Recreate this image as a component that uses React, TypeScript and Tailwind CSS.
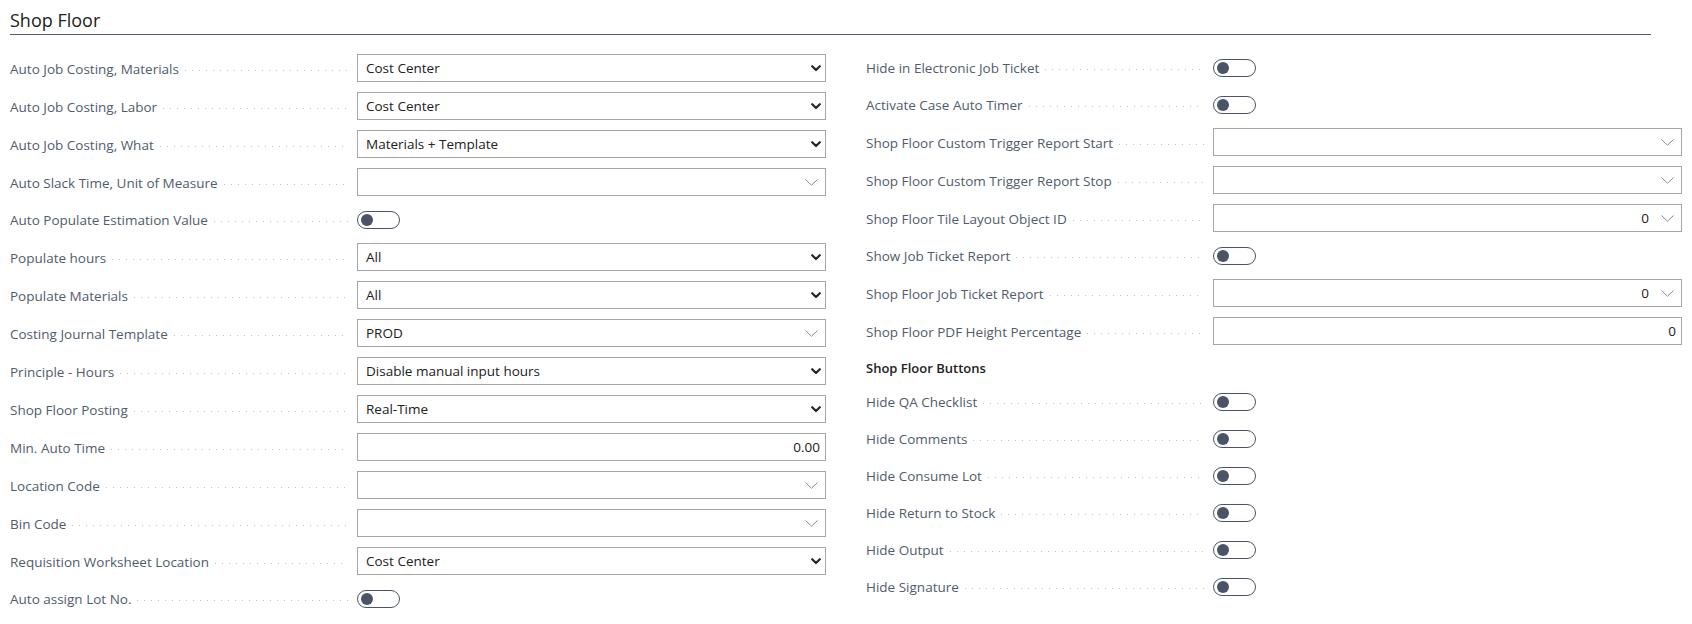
type Kind = 'option' | 'lookup' | 'number' | 'toggle';

type Field = {
  label: string;
  kind: Kind;
  value?: string;
  alignRight?: boolean;
};

const leftFields: Field[] = [
  { label: 'Auto Job Costing, Materials', kind: 'option', value: 'Cost Center' },
  { label: 'Auto Job Costing, Labor', kind: 'option', value: 'Cost Center' },
  { label: 'Auto Job Costing, What', kind: 'option', value: 'Materials + Template' },
  { label: 'Auto Slack Time, Unit of Measure', kind: 'lookup', value: '' },
  { label: 'Auto Populate Estimation Value', kind: 'toggle' },
  { label: 'Populate hours', kind: 'option', value: 'All' },
  { label: 'Populate Materials', kind: 'option', value: 'All' },
  { label: 'Costing Journal Template', kind: 'lookup', value: 'PROD' },
  { label: 'Principle - Hours', kind: 'option', value: 'Disable manual input hours' },
  { label: 'Shop Floor Posting', kind: 'option', value: 'Real-Time' },
  { label: 'Min. Auto Time', kind: 'number', value: '0.00' },
  { label: 'Location Code', kind: 'lookup', value: '' },
  { label: 'Bin Code', kind: 'lookup', value: '' },
  { label: 'Requisition Worksheet Location', kind: 'option', value: 'Cost Center' },
  { label: 'Auto assign Lot No.', kind: 'toggle' },
];

const rightFields: Field[] = [
  { label: 'Hide in Electronic Job Ticket', kind: 'toggle' },
  { label: 'Activate Case Auto Timer', kind: 'toggle' },
  { label: 'Shop Floor Custom Trigger Report Start', kind: 'lookup', value: '' },
  { label: 'Shop Floor Custom Trigger Report Stop', kind: 'lookup', value: '' },
  { label: 'Shop Floor Tile Layout Object ID', kind: 'lookup', value: '0', alignRight: true },
  { label: 'Show Job Ticket Report', kind: 'toggle' },
  { label: 'Shop Floor Job Ticket Report', kind: 'lookup', value: '0', alignRight: true },
  { label: 'Shop Floor PDF Height Percentage', kind: 'number', value: '0' },
];

const buttonFields: Field[] = [
  { label: 'Hide QA Checklist', kind: 'toggle' },
  { label: 'Hide Comments', kind: 'toggle' },
  { label: 'Hide Consume Lot', kind: 'toggle' },
  { label: 'Hide Return to Stock', kind: 'toggle' },
  { label: 'Hide Output', kind: 'toggle' },
  { label: 'Hide Signature', kind: 'toggle' },
];

function BoldChevron() {
  return (
    <svg width="10" height="7" viewBox="0 0 10 7" className="shrink-0">
      <path d="M1.2 1.2 L5 5 L8.8 1.2" fill="none" stroke="#262626" strokeWidth="2.2" strokeLinecap="round" strokeLinejoin="round" />
    </svg>
  );
}

function ThinChevron() {
  return (
    <svg width="13" height="7" viewBox="0 0 13 7" className="shrink-0">
      <path d="M0.5 0.5 L6.5 6.2 L12.5 0.5" fill="none" stroke="#8a8a8a" strokeWidth="1" />
    </svg>
  );
}

function Toggle() {
  return (
    <div className="flex items-center w-[43px] h-[18px] rounded-full border border-[#4a5466] bg-white">
      <div className="w-[12px] h-[12px] rounded-full bg-[#4a5466] ml-[3px]" />
    </div>
  );
}

function Control({ field }: { field: Field }) {
  if (field.kind === 'toggle') return <Toggle />;

  if (field.kind === 'number') {
    return (
      <div className="flex items-center justify-end w-[469px] h-[28px] border border-[#a6a6a6] bg-white pr-[5px] text-[13.5px] text-[#212121]">
        {field.value}
      </div>
    );
  }

  if (field.kind === 'option') {
    return (
      <div className="flex items-center w-[469px] h-[28px] border border-[#a6a6a6] bg-white pl-[8px] pr-[4px] text-[13.5px] text-[#212121]">
        <span className="flex-1">{field.value}</span>
        <BoldChevron />
      </div>
    );
  }

  return (
    <div className="flex items-center w-[469px] h-[28px] border border-[#a6a6a6] bg-white pl-[8px] pr-[7px] text-[13.5px] text-[#212121]">
      <span className={field.alignRight ? 'flex-1 text-right pr-[12px]' : 'flex-1'}>{field.value}</span>
      <ThinChevron />
    </div>
  );
}

function Row({ field }: { field: Field }) {
  const tall = field.kind === 'toggle' ? 'h-[37px]' : 'h-[38px]';
  return (
    <div className={`flex items-center ${tall}`}>
      <div className="flex items-center w-[347px] shrink-0 pt-[2px]">
        <span className="text-[13.5px] text-[#505c6d] whitespace-nowrap">{field.label}</span>
        <div className="flex-1 h-px mt-[2px] ml-[6px] mr-[9px] bg-[linear-gradient(to_right,#c2c2c2_1px,transparent_1px)] bg-[length:7px_1px]" />
      </div>
      <Control field={field} />
    </div>
  );
}

export default function App() {
  return (
    <div className="w-[1692px] h-[624px] bg-white overflow-hidden font-['Open_Sans',sans-serif]">
      <div className="ml-[10px] mr-[41px] border-b border-[#505c6d] pt-[8px] pb-[2px] text-[18px] leading-[24px] text-[#212121]">
        Shop Floor
      </div>

      <div className="flex gap-[40px] pl-[10px] mt-[14px]">
        <div className="flex flex-col w-[816px]">
          {leftFields.map((f) => (
            <Row key={f.label} field={f} />
          ))}
        </div>

        <div className="flex flex-col w-[816px]">
          {rightFields.map((f) => (
            <Row key={f.label} field={f} />
          ))}
          <div className="h-[33px] pt-[8px] text-[13px] leading-[20px] font-semibold text-[#212121]">
            Shop Floor Buttons
          </div>
          {buttonFields.map((f) => (
            <Row key={f.label} field={f} />
          ))}
        </div>
      </div>
    </div>
  );
}
